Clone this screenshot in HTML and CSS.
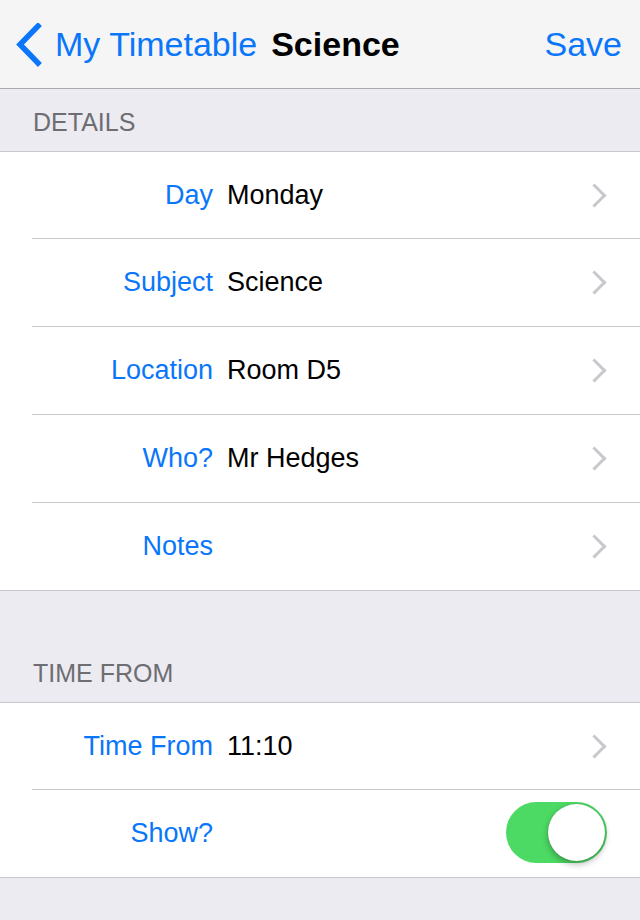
FILE: index.html
```html
<!DOCTYPE html>
<html lang="en">
<head>
  <meta charset="UTF-8">
  <meta name="viewport" content="width=device-width, initial-scale=1.0">
  <title>Science</title>
  <link rel="stylesheet" href="styles.css">
</head>
<body>
  <div class="navbar">
    <a class="back" href="#">
      <svg class="back-icon" width="30" height="44" viewBox="0 0 30 44">
        <polyline points="24,3 6,21.5 24,40" fill="none" stroke="#0a76fa" stroke-width="5.5" stroke-linecap="square"/>
      </svg>
      <span>My Timetable</span>
    </a>
    <span class="nav-title">Science</span>
    <a class="nav-save" href="#">Save</a>
  </div>

  <div class="section-header">DETAILS</div>
  <div class="group">
    <div class="row">
      <span class="label">Day</span>
      <span class="value">Monday</span>
      <span class="chevron"></span>
    </div>
    <div class="row">
      <span class="label">Subject</span>
      <span class="value">Science</span>
      <span class="chevron"></span>
    </div>
    <div class="row">
      <span class="label">Location</span>
      <span class="value">Room D5</span>
      <span class="chevron"></span>
    </div>
    <div class="row">
      <span class="label">Who?</span>
      <span class="value">Mr Hedges</span>
      <span class="chevron"></span>
    </div>
    <div class="row">
      <span class="label">Notes</span>
      <span class="value"></span>
      <span class="chevron"></span>
    </div>
  </div>

  <div class="section-header tall">TIME FROM</div>
  <div class="group">
    <div class="row">
      <span class="label">Time From</span>
      <span class="value">11:10</span>
      <span class="chevron"></span>
    </div>
    <div class="row">
      <span class="label">Show?</span>
      <span class="value"></span>
      <span class="switch on"><span class="knob"></span></span>
    </div>
  </div>
</body>
</html>
```

FILE: styles.css
```css
body {
  margin: 0;
  font-family: "Liberation Sans", Arial, sans-serif;
  background-color: #ebebf1; /* grouped table background */
  color: #000;
  height: 920px;
  overflow: hidden;
}
a {
  text-decoration: none;
  color: #0a76fa;
}

/* top bar */
.navbar {
  height: 88px;
  background-color: #f5f5f5;
  border-bottom: 1px solid #a9a9ad;
  display: flex;
  align-items: center;
  padding: 0 18px 0 14px;
  font-size: 34px;
}
.back {
  display: flex;
  align-items: center;
  gap: 11px;
  margin-top: 1px;
}
.back-icon {
  display: block;
}
.nav-title {
  font-weight: bold;
  margin-left: 14px;
}
.nav-save {
  margin-left: auto;
}

/* section headers */
.section-header {
  height: 62px;
  box-sizing: border-box;
  padding: 0 0 14px 33px;
  display: flex;
  align-items: flex-end;
  font-size: 25px;
  color: #6d6d72;
}
.section-header.tall {
  height: 111px;
}

/* rows */
.group {
  background-color: #fff;
  border-top: 1px solid #c8c7cc;
  border-bottom: 1px solid #c8c7cc;
}
.row {
  height: 88px;
  box-sizing: border-box;
  margin-left: 32px;
  padding-right: 33px;
  border-bottom: 1px solid #c8c7cc;
  display: flex;
  align-items: center;
  font-size: 27px;
}
.row:first-child {
  height: 87px;
}
.row:last-child {
  border-bottom: none;
  height: 87px;
}
.label {
  width: 181px;
  text-align: right;
  color: #0a76fa;
}
.value {
  flex: 1;
  margin-left: 14px;
}
.chevron {
  width: 14px;
  height: 14px;
  border-top: 3px solid #c7c7cc;
  border-right: 3px solid #c7c7cc;
  transform: rotate(45deg);
  margin-right: 4px;
}

/* toggle */
.switch {
  position: relative;
  width: 101px;
  height: 61px;
  border-radius: 31px;
  background-color: #4cd964;
  margin-top: -2px;
}
.knob {
  position: absolute;
  top: 2px;
  right: 2px;
  width: 57px;
  height: 57px;
  border-radius: 50%;
  background-color: #fff;
  box-shadow: 0 3px 6px rgba(0, 0, 0, 0.3), 0 0 1px rgba(0, 0, 0, 0.3);
}
```
